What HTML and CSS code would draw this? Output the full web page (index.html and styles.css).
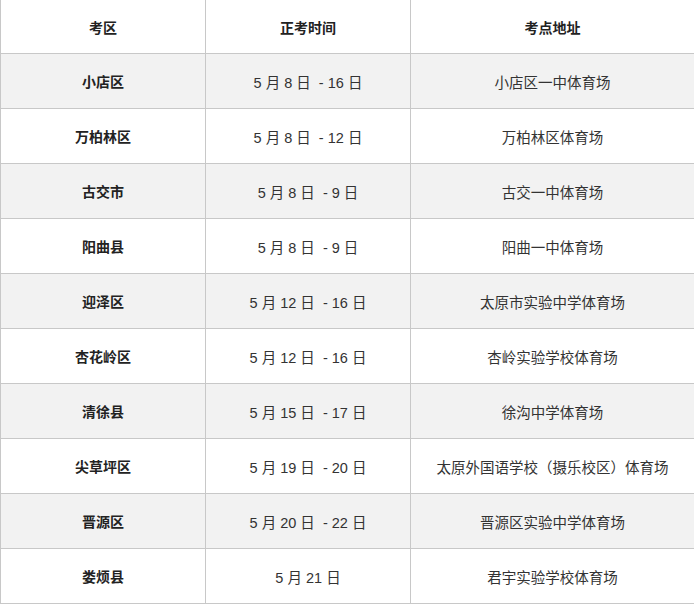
FILE: index.html
```html
<!DOCTYPE html>
<html lang="zh-CN">
<head>
<meta charset="utf-8">
<title>考区安排</title>
<link rel="stylesheet" href="styles.css">
</head>
<body>
<table class="exam-table">
  <colgroup>
    <col class="col-area">
    <col class="col-time">
    <col class="col-site">
  </colgroup>
  <thead>
    <tr class="head-row">
      <th>考区</th>
      <th>正考时间</th>
      <th>考点地址</th>
    </tr>
  </thead>
  <tbody>
    <tr class="shade"><td class="area">小店区</td><td>5 月 8 日&nbsp;&nbsp;- 16 日</td><td>小店区一中体育场</td></tr>
    <tr><td class="area">万柏林区</td><td>5 月 8 日&nbsp;&nbsp;- 12 日</td><td>万柏林区体育场</td></tr>
    <tr class="shade"><td class="area">古交市</td><td>5 月 8 日&nbsp;&nbsp;- 9 日</td><td>古交一中体育场</td></tr>
    <tr><td class="area">阳曲县</td><td>5 月 8 日&nbsp;&nbsp;- 9 日</td><td>阳曲一中体育场</td></tr>
    <tr class="shade"><td class="area">迎泽区</td><td>5 月 12 日&nbsp;&nbsp;- 16 日</td><td>太原市实验中学体育场</td></tr>
    <tr><td class="area">杏花岭区</td><td>5 月 12 日&nbsp;&nbsp;- 16 日</td><td>杏岭实验学校体育场</td></tr>
    <tr class="shade"><td class="area">清徐县</td><td>5 月 15 日&nbsp;&nbsp;- 17 日</td><td>徐沟中学体育场</td></tr>
    <tr><td class="area">尖草坪区</td><td>5 月 19 日&nbsp;&nbsp;- 20 日</td><td>太原外国语学校（摄乐校区）体育场</td></tr>
    <tr class="shade"><td class="area">晋源区</td><td>5 月 20 日&nbsp;&nbsp;- 22 日</td><td>晋源区实验中学体育场</td></tr>
    <tr><td class="area">娄烦县</td><td>5 月 21 日</td><td>君宇实验学校体育场</td></tr>
  </tbody>
</table>
</body>
</html>
```
FILE: styles.css
```css
html, body {
  margin: 0;
  padding: 0;
  background: #ffffff;
}

.exam-table {
  width: 694px;
  border-collapse: collapse;
  table-layout: fixed;
  font-family: "Liberation Sans", "Noto Sans CJK SC", sans-serif;
  font-size: 14.5px;
  color: #333333;
}

.col-area { width: 205px; }
.col-time { width: 205px; }
.col-site { width: 284px; }

.exam-table th,
.exam-table td {
  border: 1px solid #c8c8c8;
  text-align: center;
  vertical-align: middle;
  padding: 0 4px;
  white-space: nowrap;
}

.exam-table th {
  border-top: none;
  height: 53px;
  font-weight: bold;
  font-size: 14px;
  color: #222222;
}

.exam-table td {
  height: 54px;
}

.exam-table td.area {
  font-weight: bold;
  font-size: 14px;
  color: #222222;
}

.shade td {
  background: #f2f2f2;
}
```
